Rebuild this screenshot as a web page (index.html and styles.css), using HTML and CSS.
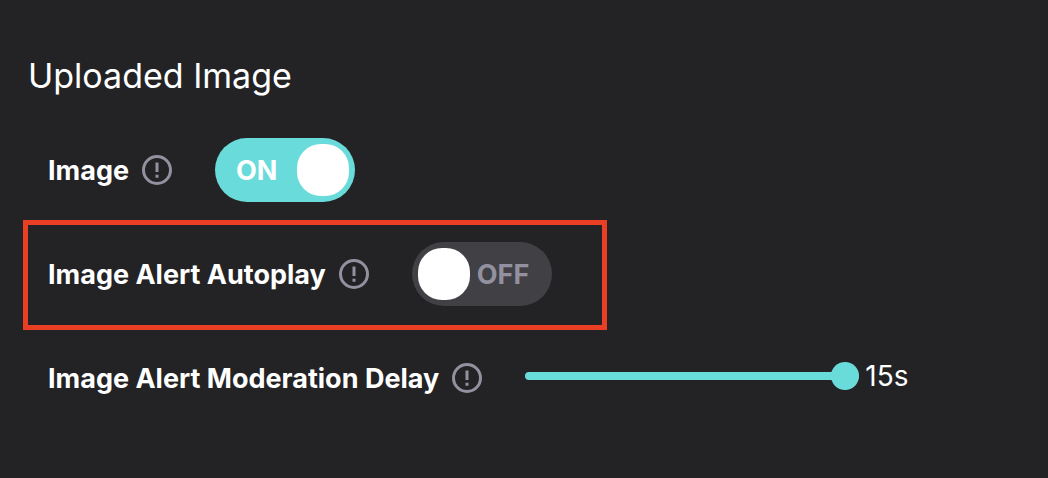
FILE: index.html
```html
<!DOCTYPE html>
<html lang="en">
<head>
  <meta charset="UTF-8">
  <title>Uploaded Image</title>
  <link rel="stylesheet" href="styles.css">
</head>
<body>
  <h1>Uploaded Image</h1>

  <div class="row">
    <label for="image">Image</label>
    <svg class="info" viewBox="0 0 30 30"><circle cx="15" cy="15" r="13.5"/><path d="M15 7.5v9.5M15 19.7v3"/></svg>
    <span class="switch">
      <input type="checkbox" id="image" checked>
      <span class="state on">ON</span>
      <span class="state off">OFF</span>
    </span>
  </div>

  <div class="row highlight">
    <label for="autoplay">Image Alert Autoplay</label>
    <svg class="info" viewBox="0 0 30 30"><circle cx="15" cy="15" r="13.5"/><path d="M15 7.5v9.5M15 19.7v3"/></svg>
    <span class="switch">
      <input type="checkbox" id="autoplay">
      <span class="state on">ON</span>
      <span class="state off">OFF</span>
    </span>
  </div>

  <div class="row">
    <label for="delay">Image Alert Moderation Delay</label>
    <svg class="info" viewBox="0 0 30 30"><circle cx="15" cy="15" r="13.5"/><path d="M15 7.5v9.5M15 19.7v3"/></svg>
    <div class="slider">
      <input type="range" id="delay" min="0" max="15" value="15">
      <output for="delay" id="delayVal">15s</output>
    </div>
  </div>

  <script>
    const delay = document.getElementById('delay');
    const delayVal = document.getElementById('delayVal');

    delay.addEventListener('input', () => {
      delayVal.textContent = `${delay.value}s`;
      delay.style.setProperty('--fill', `${delay.value / delay.max * 100}%`);
    });
  </script>
</body>
</html>
```

FILE: styles.css
```css
body {
  margin: 0;
  padding: 52px 24px 48px;
  font-family: Inter, sans-serif;
  background: #232325;
  color: white;
}

h1 {
  margin: 0 4px 18px;
  font-size: 34px;
  line-height: 48px;
  font-weight: 400;
}

.row {
  display: flex;
  align-items: center;
  box-sizing: border-box;
  height: 104px;
  padding: 0 24px;
}

.highlight {
  width: fit-content;
  height: 110px;
  margin: -2px -1px -4px;
  padding: 0 50px 2px 20px;
  border: 5px solid #eb3f25;
}

label {
  font-size: 27px;
  font-weight: 700;
}

.info {
  width: 30px;
  height: 30px;
  margin-left: 13px;
  margin-right: 43px;
  fill: none;
  stroke: #9391a0;
  stroke-width: 3;
}

/* toggle */
.switch {
  display: grid;
  align-items: center;
}

.switch > * {
  grid-area: 1 / 1;
}

.switch input {
  appearance: none;
  display: flex;
  box-sizing: border-box;
  width: 140px;
  height: 64px;
  margin: 0;
  padding: 6px;
  border-radius: 32px;
  background: #414045;
}

.switch input::before {
  content: "";
  width: 52px;
  height: 52px;
  border-radius: 24px;
  background: white;
}

.switch input:checked {
  justify-content: flex-end;
  background: #6adbdb;
}

.state {
  font-size: 27px;
  font-weight: 700;
  pointer-events: none;
}

.on {
  display: none;
  padding-left: 21px;
}

.off {
  padding-left: 65px;
  color: #9391a0;
}

input:checked ~ .on {
  display: block;
}

input:checked ~ .off {
  display: none;
}

/* slider */
.slider {
  display: flex;
  align-items: center;
  padding-bottom: 4px;
}

input[type="range"] {
  --fill: 100%;
  appearance: none;
  width: 334px;
  height: 28px;
  margin: 0;
  background: none;
}

input[type="range"]::-webkit-slider-runnable-track {
  height: 8px;
  border-radius: 4px;
  background: linear-gradient(to right, #6adbdb var(--fill), #414045 var(--fill));
}

input[type="range"]::-webkit-slider-thumb {
  appearance: none;
  width: 28px;
  height: 28px;
  margin-top: -10px;
  border-radius: 50%;
  background: #6adbdb;
}

output {
  margin-left: 6px;
  font-size: 28px;
}
```
